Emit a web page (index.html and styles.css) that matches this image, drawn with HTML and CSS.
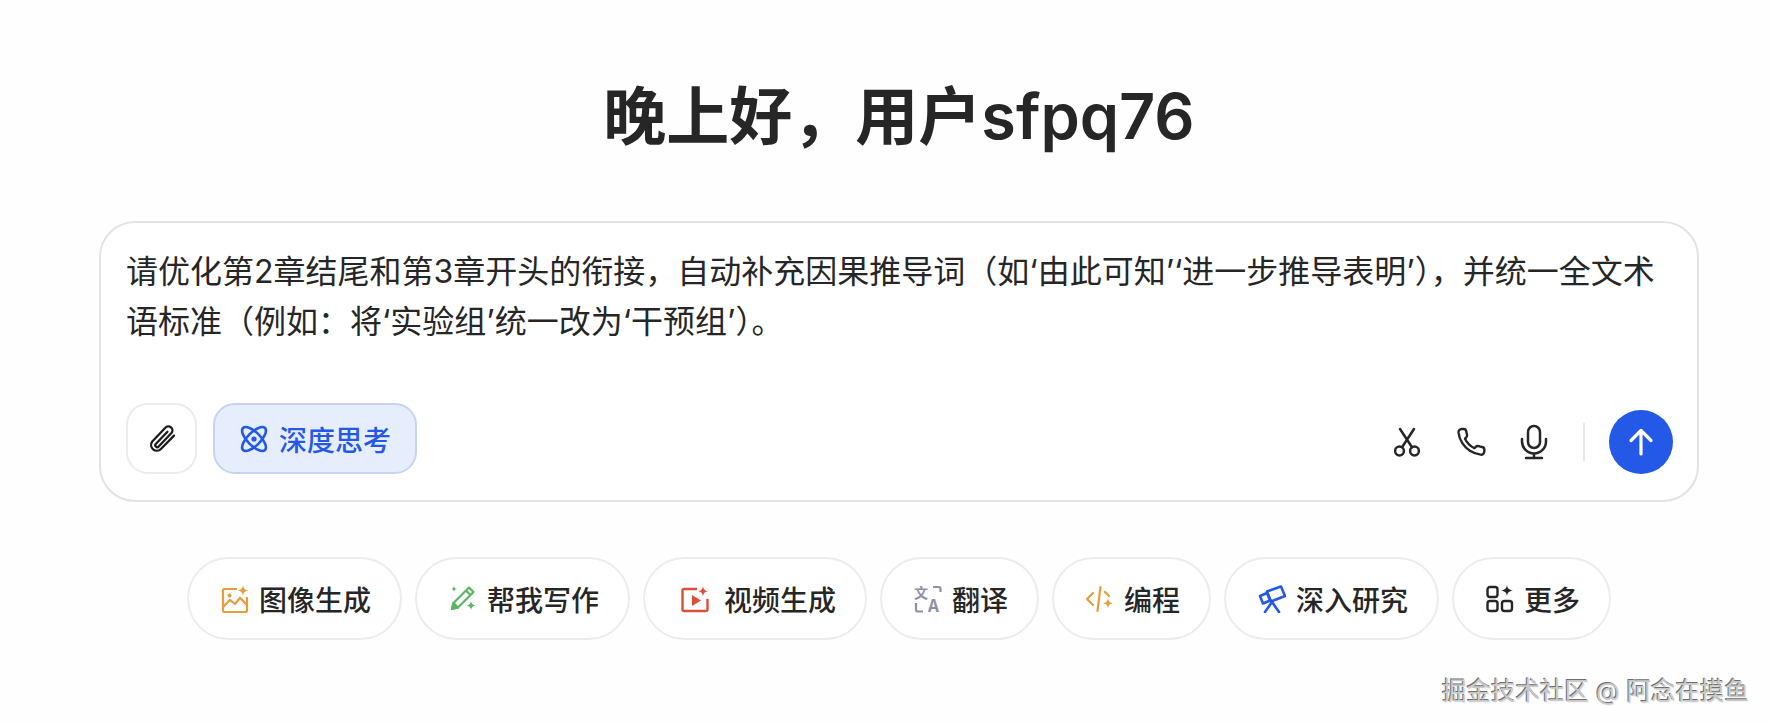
FILE: index.html
```html
<!DOCTYPE html>
<html lang="zh-CN">
<head>
  <meta charset="UTF-8" />
  <title>晚上好&#xFF0C;用户sfpq76</title>
  <link rel="stylesheet" href="styles.css">
</head>
<body>
  <div class="page">
    <h1 class="greeting">晚上好&#xFF0C;用户sfpq76</h1>

    <!-- Input card -->
    <div class="composer">
      <p class="prompt">请优化第2章结尾和第3章开头的衔接&#xFF0C;自动补充因果推导词&#xFF08;如‘由此可知’‘进一步推导表明’&#xFF09;&#xFF0C;并统一全文术语标准&#xFF08;例如&#xFF1A;将‘实验组’统一改为‘干预组’&#xFF09;。</p>
      <div class="toolbar">
        <button class="btn-attach">
          <svg width="32" height="32" viewBox="0 0 24 24" fill="none" stroke="#1c1c1c" stroke-width="1.700" stroke-linecap="round" stroke-linejoin="round"><path d="M21 9.500l-9.800 10a4.300 4.300 0 0 1-6.500-5.600l9.800-10.300a3 3 0 0 1 4.600 3.900l-9.600 10.100a1.400 1.400 0 0 1-2.200-1.800l8.800-9.200"/></svg>
        </button>
        <button class="btn-think">
          <svg width="28" height="28" viewBox="0 0 28 28" fill="none" stroke="#2458e6" stroke-width="2.600"><ellipse cx="14" cy="14" rx="15.500" ry="6.500" transform="rotate(45 14 14)"/><ellipse cx="14" cy="14" rx="15.500" ry="6.500" transform="rotate(-45 14 14)"/><circle cx="14" cy="14" r="2.600" fill="#2458e6" stroke="none"/></svg>
          <span>深度思考</span>
        </button>
        <div class="toolbar-right">
          <svg class="tool-icon" width="30" height="32" viewBox="0 0 30 32" fill="none" stroke="#262626" stroke-width="2.500" stroke-linecap="round"><circle cx="7.500" cy="25" r="4.400"/><circle cx="22.500" cy="25" r="4.400"/><path d="M10 21.300L22 3M20 21.300L8 3"/></svg>
          <svg class="tool-icon" width="32" height="32" viewBox="0 0 24 24" fill="none" stroke="#262626" stroke-width="1.800" stroke-linecap="round" stroke-linejoin="round"><path d="M22 17.500v1.500a2.500 2.500 0 0 1-2.700 2.500 18.500 18.500 0 0 1-8.100-2.900 18.200 18.200 0 0 1-5.700-5.700 18.500 18.500 0 0 1-2.900-8.100A2.500 2.500 0 0 1 5 2.200h1.400a2 2 0 0 1 2 1.700c.1.900.3 1.700.6 2.500a2 2 0 0 1-.5 2.100l-1 1a15 15 0 0 0 7.100 7.100l1-1a2 2 0 0 1 2.100-.5c.8.300 1.600.5 2.500.6a2 2 0 0 1 1.800 1.800z"/></svg>
          <svg class="tool-icon" width="28" height="36" viewBox="0 0 28 36" fill="none" stroke="#262626" stroke-width="2.500" stroke-linecap="round"><rect x="8" y="2" width="12" height="22" rx="6"/><path d="M2 15v2.500a12 12 0 0 0 24 0V15M14 29.500V34M6 34h16"/></svg>
          <div class="divider"></div>
          <button class="btn-send">
            <svg width="30" height="32" viewBox="0 0 30 32" fill="none" stroke="#fff" stroke-width="3.200" stroke-linecap="round" stroke-linejoin="round"><path d="M15 28V5M5 14.500L15 4.500l10 10"/></svg>
          </button>
        </div>
      </div>
    </div>

    <!-- Shortcuts -->
    <div class="chips">
      <div class="chip">
        <svg width="28" height="28" viewBox="0 0 28 28" fill="none" stroke="#e99c3c" stroke-width="2.200"><path d="M16 4H3.500A1.500 1.500 0 0 0 2 5.500v20A1.500 1.500 0 0 0 3.500 27h21a1.500 1.500 0 0 0 1.500-1.500V12"/><path d="M2 22l7-7 5 4 5-6 7 7"/><circle cx="8.500" cy="10.500" r="2" fill="#e99c3c" stroke="none"/><path d="M22 0c.5 3.500 2 5 5.500 5.500C24 6 22.500 7.500 22 11c-.5-3.500-2-5-5.500-5.500C20 5 21.500 3.500 22 0z" fill="#e99c3c" stroke="none"/></svg>
        <span>图像生成</span>
      </div>
      <div class="chip">
        <svg width="28" height="28" viewBox="0 0 28 28" fill="none" stroke="#5cb563" stroke-width="2.200" stroke-linejoin="round"><path d="M20 2.500l4.500 4.500L9 22.500l-6 1.500 1.500-6z"/><path d="M17 5.500l4.500 4.500"/><path d="M3 24l1.500-6 4.500 4.500z" fill="#5cb563"/><path d="M22 16c.4 2.800 1.600 4 4.500 4.500-2.900.5-4.100 1.700-4.500 4.500-.4-2.800-1.600-4-4.500-4.500 2.900-.5 4.100-1.700 4.500-4.500zM5 1c.3 1.900 1.100 2.700 3 3-1.900.3-2.700 1.100-3 3-.3-1.900-1.100-2.700-3-3 1.900-.3 2.700-1.100 3-3z" fill="#5cb563" stroke="none"/></svg>
        <span>帮我写作</span>
      </div>
      <div class="chip chip-video">
        <svg width="28" height="28" viewBox="0 0 28 28" fill="none" stroke="#dc4f37" stroke-width="2.400"><path d="M16 4H3a1.500 1.500 0 0 0-1.500 1.500v19A1.500 1.500 0 0 0 3 26h22a1.500 1.500 0 0 0 1.500-1.500V14"/><path d="M11 10l9 5.500-9 5.500z" fill="#dc4f37" stroke="none"/><path d="M22 1c.5 3.400 1.800 4.700 5 5.200-3.200.5-4.500 1.800-5 5.200-.5-3.400-1.800-4.700-5-5.200 3.200-.5 4.500-1.800 5-5.200z" fill="#dc4f37" stroke="none"/></svg>
        <span>视频生成</span>
      </div>
      <div class="chip">
        <svg width="28" height="36" viewBox="0 -4 28 36" fill="none" stroke="#8f90a8" stroke-width="2.200"><text class="icon-glyph" x="0" y="13" font-size="14" font-weight="700" fill="#8f90a8" stroke="none">文</text><text class="icon-glyph" x="14" y="27" font-size="17" font-weight="700" fill="#8f90a8" stroke="none">A</text><path d="M19 2h6a1.500 1.500 0 0 1 1.500 1.500V7M2 18v7a1.500 1.500 0 0 0 1.500 1.500H9"/></svg>
        <span>翻译</span>
      </div>
      <div class="chip">
        <svg width="28" height="28" viewBox="0 0 28 28" fill="none" stroke="#e99c3c" stroke-width="2.200" stroke-linecap="round" stroke-linejoin="round"><path d="M7 8l-6 6 6 6M14.500 2l-3 24M19 7l4 4"/><path d="M22 13c.5 3.500 1.800 4.800 5.200 5.300-3.400.5-4.700 1.800-5.200 5.300-.5-3.500-1.800-4.800-5.200-5.300 3.400-.5 4.700-1.800 5.200-5.300z" fill="#e99c3c" stroke="none"/></svg>
        <span>编程</span>
      </div>
      <div class="chip">
        <svg width="28" height="28" viewBox="0 0 28 28" fill="none" stroke="#2458e6" stroke-width="2.600" stroke-linecap="round" stroke-linejoin="round"><path d="M9 6.500l14-5 4 9.500-14 5.500z"/><path d="M2 11l7-3 3 7.500-7 3z"/><path d="M14 17l-7 10M14 17l7 10"/></svg>
        <span>深入研究</span>
      </div>
      <div class="chip">
        <svg width="28" height="28" viewBox="0 0 28 28" fill="none" stroke="#262626" stroke-width="2.400"><rect x="1.500" y="2" width="10" height="10" rx="2.500"/><rect x="1.500" y="16" width="10" height="10" rx="2.500"/><rect x="16" y="16" width="10" height="10" rx="2.500"/><path d="M21 0c.5 3.400 1.800 4.700 6 5.500-4.200.8-5.500 2.100-6 5.500-.5-3.400-1.800-4.700-6-5.500 4.200-.8 5.500-2.100 6-5.500z" fill="#262626" stroke="none"/></svg>
        <span>更多</span>
      </div>
    </div>
  </div>

  <div class="watermark">掘金技术社区 @ 阿念在摸鱼</div>
</body>
</html>
```

FILE: styles.css
```css
* { box-sizing: border-box; }
html, body { margin: 0; height: 100%; }
body {
  background: #fefefe;
  color: #262626;
  font-family: Inter, "Noto Sans CJK SC", sans-serif;
  overflow: hidden;
}
button { font-family: inherit; cursor: pointer; padding: 0; }
.page { width: 1600px; margin-left: 99px; padding-top: 71px; }
.greeting {
  margin: 0 0 60px;
  height: 90px;
  line-height: 90px;
  font-size: 63px;
  font-weight: 600;
  text-align: center;
}

.composer {
  height: 281px;
  padding: 24px 22px 24px 25px;
  background: #fff;
  border: 2px solid #e3e3e3;
  border-radius: 36px;
}
.prompt {
  margin: 0 0 56px;
  height: 100px;
  font-size: 32px;
  line-height: 50px;
}
.toolbar { display: flex; align-items: center; }
.btn-attach {
  display: flex;
  align-items: center;
  justify-content: center;
  width: 71px;
  height: 71px;
  margin-right: 16px;
  background: #fff;
  border: 2px solid #ececec;
  border-radius: 22px;
}
.btn-think {
  display: flex;
  align-items: center;
  gap: 11px;
  height: 71px;
  padding: 0 24px 0 25px;
  background: #e6edfc;
  border: 2px solid #c6d3f5;
  border-radius: 22px;
  color: #2458e6;
  font-size: 28px;
  font-weight: 500;
}
.toolbar-right { display: flex; align-items: center; margin-left: auto; padding: 6px 2px 0 0; }
.tool-icon { margin-right: 33px; }
.divider { width: 2px; height: 38px; margin: 0 24px 0 2px; background: #e8e8e8; }
.btn-send {
  display: flex;
  align-items: center;
  justify-content: center;
  width: 64px;
  height: 64px;
  background: #2458e6;
  border: none;
  border-radius: 50%;
}

.chips { display: flex; gap: 13px; margin: 55px 0 0 88px; }
.chip {
  display: flex;
  align-items: center;
  flex: none;
  gap: 10px;
  height: 83px;
  padding: 0 29px 0 32px;
  background: #fff;
  border: 2px solid #ececec;
  border-radius: 42px;
  font-size: 28px;
  font-weight: 500;
}
.chip-video { gap: 15px; padding-left: 36px; }
.icon-glyph { font-family: "Noto Sans CJK SC", sans-serif; }

.watermark {
  position: absolute;
  right: 21px;
  bottom: 17px;
  font-size: 24.500px;
  line-height: 32px;
  color: #c9c9c9;
  text-shadow: -1px -1px 0 #6f6f6f, 1px 1px 0 #f4f4f4;
}
```
